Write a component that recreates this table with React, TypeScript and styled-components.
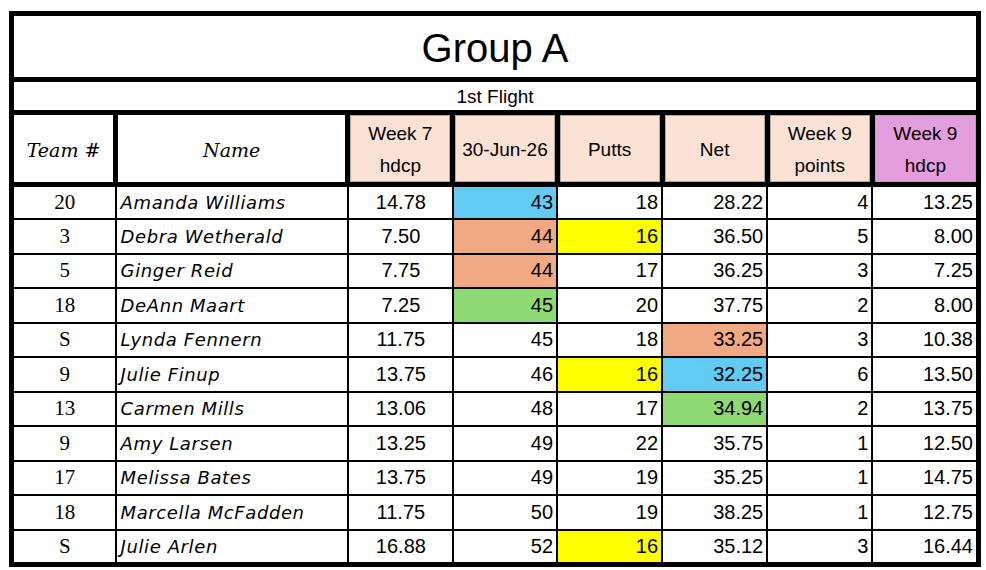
import React from 'react';
import styled, { createGlobalStyle } from 'styled-components';

const GlobalStyle = createGlobalStyle`
  html, body {
    margin: 0;
    padding: 0;
    background: #fff;
  }
`

const Page = styled.div`
  padding: 11px 0 0 9px;
  width: 986px;
  height: 570px;
  box-sizing: border-box;
`

const Sheet = styled.table`
  border-collapse: collapse;
  table-layout: fixed;
  width: 972px;
  border: 5px solid #000;
  color: #000;
`

const TitleCell = styled.td`
  height: 57px;
  padding: 4px 0 0;
  text-align: center;
  font-family: "Liberation Sans", Arial, sans-serif;
  font-size: 40px;
  border-bottom: 5px solid #000;
`

const FlightCell = styled.td`
  height: 26px;
  padding: 2px 0 0;
  text-align: center;
  font-family: "Liberation Sans", Arial, sans-serif;
  font-size: 19px;
  border-bottom: 5px solid #000;
`

const HeadCell = styled.th<{ $bg?: string; $script?: boolean }>`
  height: 58px;
  padding: 3px 0 0;
  font-weight: normal;
  text-align: center;
  background: ${p => p.$bg || '#fff'};
  box-shadow: ${p => p.$bg ? 'inset 0 0 0 1px #b0a8a4' : 'none'};
  border: 5px solid #000;
  font-family: ${p => p.$script
    ? '"DejaVu Serif", "Liberation Serif", serif'
    : '"Liberation Sans", Arial, sans-serif'};
  font-style: ${p => p.$script ? 'italic' : 'normal'};
  font-size: 19px;
  line-height: 32px;
`

const Row = styled.tr`
  height: 34.5px;
`

type Align = 'left' | 'center' | 'right';

const Cell = styled.td<{ $bg?: string; $align?: Align }>`
  padding: 0 3px 0 4px;
  border: 2px solid #000;
  background: ${p => p.$bg || '#fff'};
  text-align: ${p => p.$align || 'right'};
  font-family: "Liberation Sans", Arial, sans-serif;
  font-size: 20px;
  white-space: nowrap;
`

const TeamCell = styled(Cell)`
  font-family: "Liberation Serif", "Times New Roman", serif;
  font-size: 21px;
`

const NameCell = styled(Cell)`
  font-family: "DejaVu Sans", sans-serif;
  font-style: italic;
  font-weight: 300;
  font-size: 18px;
  letter-spacing: 0.6px;
  padding-left: 4px;
`

const BLUE = '#61cbf3';
const SALMON = '#f1a983';
const GREEN = '#8ed973';
const YELLOW = '#ffff00';
const PINK = '#fbe2d5';
const PURPLE = '#e49edd';

interface Player {
  team: string;
  name: string;
  hdcp7: string;
  score: number;
  putts: number;
  net: string;
  points: number;
  hdcp9: string;
  scoreBg?: string;
  puttsBg?: string;
  netBg?: string;
}

const players: Player[] = [
  { team: '20', name: 'Amanda Williams', hdcp7: '14.78', score: 43, putts: 18, net: '28.22', points: 4, hdcp9: '13.25', scoreBg: BLUE },
  { team: '3', name: 'Debra Wetherald', hdcp7: '7.50', score: 44, putts: 16, net: '36.50', points: 5, hdcp9: '8.00', scoreBg: SALMON, puttsBg: YELLOW },
  { team: '5', name: 'Ginger Reid', hdcp7: '7.75', score: 44, putts: 17, net: '36.25', points: 3, hdcp9: '7.25', scoreBg: SALMON },
  { team: '18', name: 'DeAnn Maart', hdcp7: '7.25', score: 45, putts: 20, net: '37.75', points: 2, hdcp9: '8.00', scoreBg: GREEN },
  { team: 'S', name: 'Lynda Fennern', hdcp7: '11.75', score: 45, putts: 18, net: '33.25', points: 3, hdcp9: '10.38', netBg: SALMON },
  { team: '9', name: 'Julie Finup', hdcp7: '13.75', score: 46, putts: 16, net: '32.25', points: 6, hdcp9: '13.50', puttsBg: YELLOW, netBg: BLUE },
  { team: '13', name: 'Carmen Mills', hdcp7: '13.06', score: 48, putts: 17, net: '34.94', points: 2, hdcp9: '13.75', netBg: GREEN },
  { team: '9', name: 'Amy Larsen', hdcp7: '13.25', score: 49, putts: 22, net: '35.75', points: 1, hdcp9: '12.50' },
  { team: '17', name: 'Melissa Bates', hdcp7: '13.75', score: 49, putts: 19, net: '35.25', points: 1, hdcp9: '14.75' },
  { team: '18', name: 'Marcella McFadden', hdcp7: '11.75', score: 50, putts: 19, net: '38.25', points: 1, hdcp9: '12.75' },
  { team: 'S', name: 'Julie Arlen', hdcp7: '16.88', score: 52, putts: 16, net: '35.12', points: 3, hdcp9: '16.44', puttsBg: YELLOW },
];

const widths = [104, 232, 105, 104, 105, 105, 105, 106];

export default function App() {
  return (
    <Page>
      <GlobalStyle />
      <Sheet>
        <colgroup>
          {widths.map((w, i) => <col key={i} style={{ width: w }} />)}
        </colgroup>
        <thead>
          <tr>
            <TitleCell colSpan={8}>Group A</TitleCell>
          </tr>
          <tr>
            <FlightCell colSpan={8}>1st Flight</FlightCell>
          </tr>
          <tr>
            <HeadCell $script>Team #</HeadCell>
            <HeadCell $script>Name</HeadCell>
            <HeadCell $bg={PINK}>Week 7<br />hdcp</HeadCell>
            <HeadCell $bg={PINK}>30-Jun-26</HeadCell>
            <HeadCell $bg={PINK}>Putts</HeadCell>
            <HeadCell $bg={PINK}>Net</HeadCell>
            <HeadCell $bg={PINK}>Week 9<br />points</HeadCell>
            <HeadCell $bg={PURPLE}>Week 9<br />hdcp</HeadCell>
          </tr>
        </thead>
        <tbody>
          {players.map((p, i) => (
            <Row key={i}>
              <TeamCell $align="center">{p.team}</TeamCell>
              <NameCell $align="left">{p.name}</NameCell>
              <Cell $align="center">{p.hdcp7}</Cell>
              <Cell $bg={p.scoreBg}>{p.score}</Cell>
              <Cell $bg={p.puttsBg}>{p.putts}</Cell>
              <Cell $bg={p.netBg}>{p.net}</Cell>
              <Cell>{p.points}</Cell>
              <Cell>{p.hdcp9}</Cell>
            </Row>
          ))}
        </tbody>
      </Sheet>
    </Page>
  );
}
